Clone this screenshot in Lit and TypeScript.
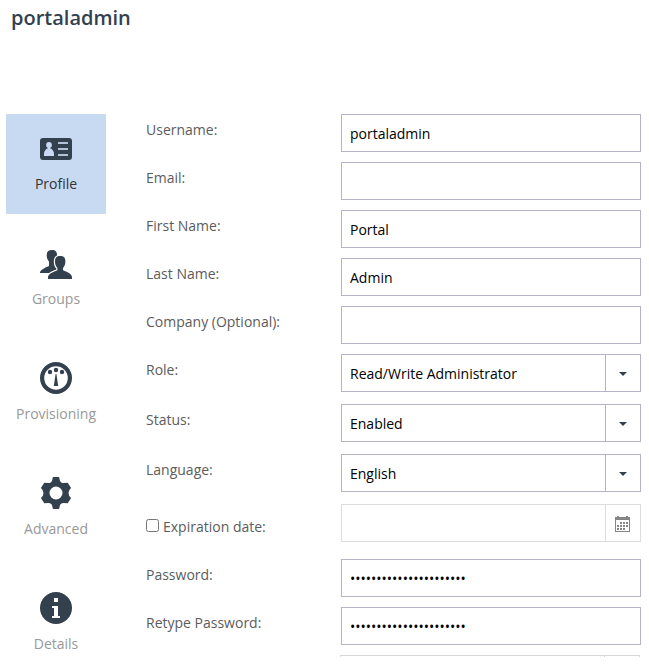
import { LitElement, html, css, svg, nothing } from "lit";
import { customElement, property } from "lit/decorators.js";

const profileIcon = svg`
  <rect x="0" y="6" width="32" height="22" rx="3" fill="#33414e"/>
  <circle cx="9" cy="13" r="2.900" fill="#c8daf2"/>
  <path d="M7.800 14h2.400v2.200c2.200.8 3.800 3 3.800 5.800v2H4v-2c0-2.800 1.600-5 3.800-5.800z" fill="#c8daf2"/>
  <path d="M18 10h10v2H18zM18 16h10v2H18zM18 22h10v2H18z" fill="#c8daf2" fill-opacity=".85"/>`;

const groupsIcon = svg`
  <path d="M12 3c3.500 0 5 1.800 5 5 0 3-.8 5-2.200 6.500V18c.8 1.500 3.200 2.500 5.200 4v4H0c0-3.200 4-4.700 9-7v-4.500C7.500 13 6.700 11 6.700 8c0-3.200 1.800-5 5.300-5z" fill="#33414e"/>
  <path d="M20.200 9c3.600 0 5.200 1.800 5.200 5.200 0 3.300-1 5.400-2.400 6.800v2.300c5 2.200 9 3.500 9 7.200V32H8v-1.500c0-3.700 4.500-5 9.400-7.200V21c-1.400-1.400-2.400-3.500-2.400-6.800C15 10.800 16.600 9 20.200 9z" fill="#33414e" stroke="#fff" stroke-width="2.400" paint-order="stroke"/>`;

const gaugeIcon = svg`
  <circle cx="16" cy="16" r="13.900" fill="none" stroke="#33414e" stroke-width="4.200"/>
  <g fill="#33414e">
    <circle cx="10" cy="10" r="2.200"/><circle cx="16" cy="8" r="2.200"/><circle cx="22" cy="10" r="2.200"/>
    <path d="M15.600 12h.8L18.200 24h-4.400z"/>
  </g>`;

const gearIcon = svg`
  <path fill="#33414e" fill-rule="evenodd" d="M12.900 0h6.200l.7 3.200Q20.600 6 23.500 6L27.700 5.700L31.100 11Q28.500 13 28.500 16T31.100 21L27.700 26.300L23.500 26Q20.600 26 19.800 28.800L19.100 32h-6.200l-.7-3.200Q11.400 26 8.500 26L4.300 26.300L.9 21Q3.500 19 3.500 16T.9 11L4.300 5.700L8.500 6Q11.400 6 12.200 3.200zM16 9.500a6.500 6.500 0 1 0 0 13 6.500 6.500 0 0 0 0-13z"/>`;

const infoIcon = svg`
  <circle cx="16" cy="16" r="16" fill="#33414e"/>
  <path d="M14 6h4v4h-4zM12 14h6v10h2v2h-8v-2h2v-8h-2z" fill="#fff"/>`;

const calendarIcon = html`<svg width="15" height="16" viewBox="0 0 15 16" shape-rendering="crispEdges">
  <path fill="#858585" fill-rule="evenodd" d="M0 1h2V0h2v1h7V0h2v1h2v15H0zM1 4v11h13V4z"/>
  <path fill="#858585" d="M5 6h2v2H5zM8 6h2v2H8zM11 6h2v2h-2zM2 9h2v2H2zM5 9h2v2H5zM8 9h2v2H8zM11 9h2v2h-2zM2 12h2v2H2zM5 12h2v2H5zM8 12h2v2H8z"/>
</svg>`;

const caretIcon = html`<svg width="8" height="4" viewBox="0 0 8 4"><path d="M0 0h8L4 4z" fill="#33414e"/></svg>`;

const tabs = [
  { label: "Profile", icon: profileIcon, active: true },
  { label: "Groups", icon: groupsIcon },
  { label: "Provisioning", icon: gaugeIcon },
  { label: "Advanced", icon: gearIcon },
  { label: "Details", icon: infoIcon },
];

type Kind = "text" | "select" | "date";
interface Field { label: string; value?: string; kind?: Kind }

const fields: Field[] = [
  { label: "Username:", value: "portaladmin" },
  { label: "Email:" },
  { label: "First Name:", value: "Portal" },
  { label: "Last Name:", value: "Admin" },
  { label: "Company (Optional):" },
  { label: "Role:", value: "Read/Write Administrator", kind: "select" },
  { label: "Status:", value: "Enabled", kind: "select" },
  { label: "Language:", value: "English", kind: "select" },
  { label: "Expiration date:", kind: "date" },
  { label: "Password:", value: "•".repeat(22) },
  { label: "Retype Password:", value: "•".repeat(22) },
];

@customElement("form-row")
class FormRow extends LitElement {
  @property({ attribute: false }) field!: Field;

  static styles = css`
    :host { display: block; }
    .row { display: flex; height: 38px; margin-bottom: 10px; }
    .row.select { margin-bottom: 12px; }
    .row.date { margin-bottom: 17px; }
    .label { width: 195px; padding-top: 6px; line-height: 20px; color: #5c5c5c; white-space: nowrap; box-sizing: border-box; }
    .date .label { display: flex; padding-top: 13px; }
    .check { width: 13px; height: 13px; margin: 2px 4px 0 0; box-sizing: border-box; border: 1px solid #767676; border-radius: 2.500px; background: #fff; }
    .box { display: flex; width: 300px; height: 38px; box-sizing: border-box; border: 1px solid #b4b4c8; background: #fff; }
    .date .box { border-color: #dcdcdc; }
    .value { flex: 1; padding: 9px 8px 0; line-height: 20px; color: #000; white-space: nowrap; }
    .trigger { width: 35px; box-sizing: border-box; flex: none; display: flex; align-items: center; justify-content: center; border-left: 1px solid #b4b4c8; padding-top: 2px; }
    .date .trigger { border-color: #dcdcdc; padding-right: 1px; }
  `;

  render() {
    const { label, value, kind = "text" } = this.field;
    return html`<div class="row ${kind}">
      <div class="label">${kind === "date" ? html`<span class="check"></span>` : nothing}<span>${label}</span></div>
      <div class="box">
        <div class="value">${value}</div>
        ${kind === "text" ? nothing : html`<div class="trigger">${kind === "date" ? calendarIcon : caretIcon}</div>`}
      </div>
    </div>`;
  }
}

@customElement("app-root")
class AppRoot extends LitElement {
  static styles = css`
    :host { display: block; height: 671px; overflow: hidden; background: #fff; font: 14px "Open Sans", "Noto Sans", sans-serif; }
    .title { margin: 0; height: 114px; padding: 4px 0 0 11px; box-sizing: border-box; font-size: 20px; line-height: 28px; font-weight: 600; color: #33414e; }
    .content { display: flex; }
    .tabs { display: flex; flex-direction: column; gap: 15px; width: 100px; margin-left: 6px; }
    .tab { height: 100px; box-sizing: border-box; padding-top: 18px; display: flex; flex-direction: column; align-items: center; color: #999; }
    .tab.active { background: #c8daf2; color: #333; }
    .tab svg { display: block; flex: none; }
    .name { margin-top: 10px; line-height: 20px; }
    .form { margin-left: 40px; height: 543px; overflow: hidden; }
    .next { display: flex; margin-left: 194px; width: 300px; height: 38px; box-sizing: border-box; border: 1px solid #d8d8d8; }
    .next-trigger { margin-left: auto; width: 34px; border-left: 1px solid #d0d0d0; }
  `;

  render() {
    return html`
      <h1 class="title">portaladmin</h1>
      <div class="content">
        <nav class="tabs">
          ${tabs.map(t => html`<div class="tab ${t.active ? "active" : ""}">
            <svg width="32" height="32" viewBox="0 0 32 32">${t.icon}</svg>
            <span class="name">${t.label}</span>
          </div>`)}
        </nav>
        <div class="form">
          ${fields.map(f => html`<form-row .field=${f}></form-row>`)}
          <div class="next"><div class="next-trigger"></div></div>
        </div>
      </div>`;
  }
}
